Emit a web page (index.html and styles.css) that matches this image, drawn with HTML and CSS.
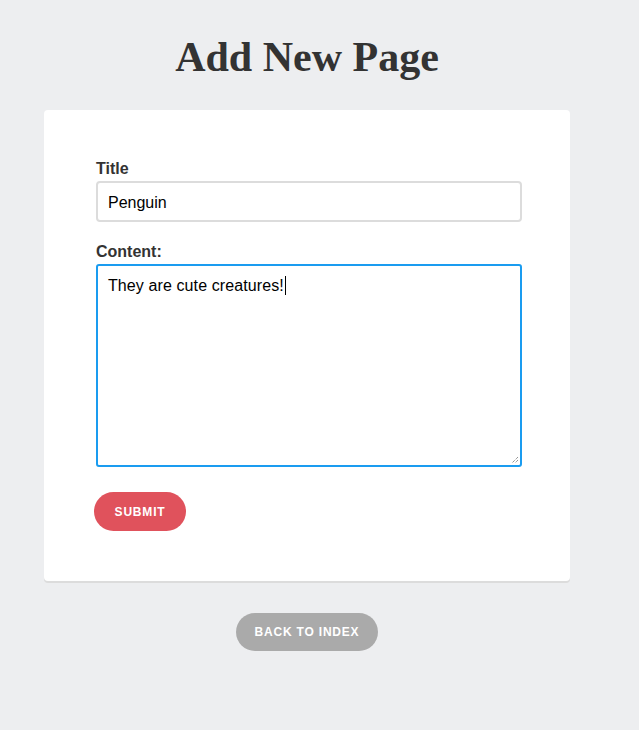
FILE: index.html
```html
<!DOCTYPE html>
<html>
<head>
<meta charset="utf-8">
<link rel="stylesheet" href="styles.css">
</head>
<body>
<div class="page">
  <h1 class="title">Add New Page</h1>
  <div class="card">
    <form class="form">
      <label class="label" for="t">Title</label>
      <input class="input" id="t" type="text" value="Penguin">
      <label class="label label-content" for="c">Content:</label>
      <div class="textarea"><span>They are cute creatures!</span><span class="caret"></span><svg class="grip" width="8" height="8" viewBox="0 0 8 8"><path d="M7 1L1 7M7 4L4 7" stroke="#666" stroke-width="1" stroke-dasharray="1 1"/></svg></div>
      <button class="btn btn-submit" type="button">Submit</button>
    </form>
  </div>
  <div class="back-wrap"><a class="btn btn-back">Back to index</a></div>
</div>
</body>
</html>
```
FILE: styles.css
```css
html, body { margin: 0; padding: 0; }
body { background: #edeef0; font-family: "Liberation Sans", Arial, sans-serif; color: #333; }
.page { width: 614px; display: flex; flex-direction: column; align-items: center; }
.title { font-family: "Liberation Serif", "Times New Roman", serif; font-weight: bold; font-size: 42px; color: #333; margin: 33px 0 0; line-height: 48px; }
.card { margin-top: 29px; width: 526px; box-sizing: border-box; background: #fff; border-radius: 4px; box-shadow: 0 2px 0 #dcdcdc; padding: 50px 48px 50px 52px; }
.form { display: flex; flex-direction: column; align-items: flex-start; }
.label { font-weight: bold; font-size: 16px; line-height: 18px; color: #333; margin-bottom: 3px; }
.label-content { margin-top: 21px; }
.input { width: 426px; height: 41px; box-sizing: border-box; border: 2px solid #dcdcdc; border-radius: 4px; padding: 2px 10px 0; font-family: "Liberation Sans", Arial, sans-serif; font-size: 16px; color: #000; outline: none; }
.textarea { position: relative; width: 426px; height: 203px; box-sizing: border-box; border: 2px solid #1a9cf0; border-radius: 3px; padding: 10px 10px; font-size: 16px; line-height: 20px; color: #000; letter-spacing: 0.1px; }
.caret { display: inline-block; width: 1px; height: 19px; background: #000; vertical-align: -4px; margin-left: 1px; }
.grip { position: absolute; right: 1px; bottom: 1px; }
.btn { display: inline-flex; align-items: center; justify-content: center; border: none; border-radius: 20px; color: #fff; font-family: "Liberation Sans", Arial, sans-serif; font-weight: bold; font-size: 12px; letter-spacing: 0.8px; text-transform: uppercase; }
.btn-submit { margin-top: 25px; margin-left: -2px; width: 92px; height: 39px; background: #e0525c; }
.btn-back { width: 142px; height: 38px; background: #aaaaaa; }
.back-wrap { margin-top: 32px; display: flex; justify-content: center; }
```
